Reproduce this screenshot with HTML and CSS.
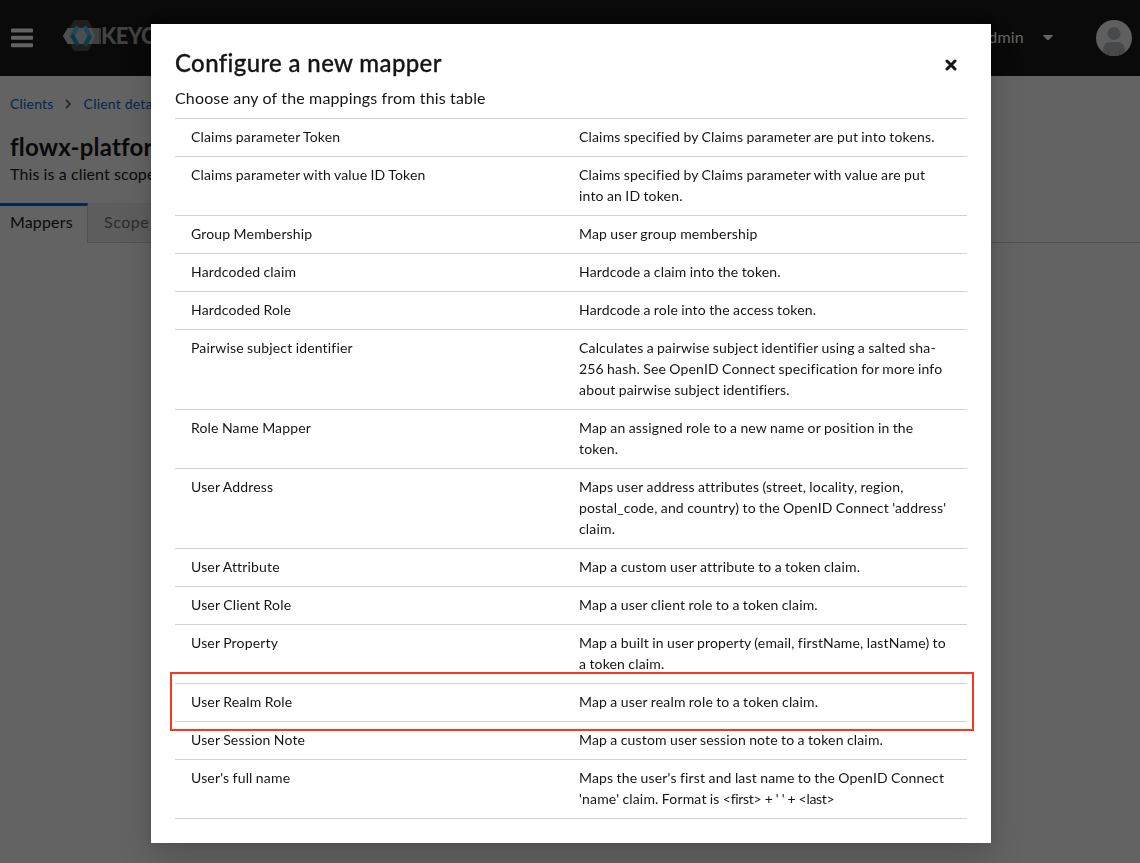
FILE: index.html
```html
<!DOCTYPE html>
<html lang="en">
<head>
<meta charset="utf-8">
<title>Keycloak Administration Console</title>
<link rel="stylesheet" href="styles.css">
</head>
<body>
<div class="app">
  <header class="masthead">
    <svg class="menu" width="22" height="20" viewBox="0 0 22 20"><g fill="#fff"><rect y="0.5" width="22" height="4" rx="1"/><rect y="7.800" width="22" height="4" rx="1"/><rect y="15.200" width="22" height="4" rx="1"/></g></svg>
    <div class="brand">
      <svg width="38" height="32" viewBox="0 0 38 32">
        <path d="M11 0h14l7 12v8l-7 11H11L3 17v-3z" fill="#4d4d4d"/>
        <path d="M4.800 8H38v16H4.800L0 16z" fill="#a0a0a0"/>
        <path d="M4.800 8H28l4 8-4 8H4.800L0 16z" fill="#c8c8c8"/>
        <path d="M37 8v16" stroke="#6a6a6a"/>
        <g fill="none" stroke-width="4.400">
          <path d="M14.800 6.500L9 16" stroke="#4ab8d4"/>
          <path d="M9 15l5.800 10.500" stroke="#1d8fab"/>
          <path d="M21.500 6.500L27.300 17" stroke="#4ab8d4"/>
          <path d="M27.300 16l-5.800 9.500" stroke="#1d9dbb"/>
        </g>
      </svg>
      <span class="brand-name">KEYC</span>
    </div>
    <span class="user">admin</span>
    <svg class="caret" width="10" height="6" viewBox="0 0 10 6"><path d="M.7 0h8.600q.9 0 .4.900L5.700 5q-.7.700-1.400 0L.3.900Q-.2 0 .7 0z" fill="#fff"/></svg>
    <svg width="36" height="36" viewBox="0 0 36 36">
      <defs><clipPath id="avatar"><circle cx="18" cy="18" r="18"/></clipPath></defs>
      <g clip-path="url(#avatar)"><path d="M0 0h36v36H0z" fill="#f5f5f5"/><g fill="#b8bbbe"><circle cx="18" cy="13.500" r="6.500"/><path d="M7 36v-5q0-9 8-9h6q8 0 8 9v5z"/></g><path d="M12.200 31v5M23.800 31v5" stroke="#8a8d90"/></g>
    </svg>
  </header>
  <nav class="crumbs"><a>Clients</a><svg width="6" height="10" viewBox="0 0 6 10"><path d="M1 1l4 4-4 4" fill="none" stroke="#6a6e73" stroke-width="1.800"/></svg><a>Client deta</a></nav>
  <h1 class="page-title">flowx-platfor</h1>
  <p class="page-note">This is a client scope</p>
  <div class="tabs"><span class="tab tab-current">Mappers</span><span class="tab tab-other">Scope</span></div>
</div>
<div class="backdrop">
  <section class="modal">
    <div class="modal-head">
      <h2 class="modal-title">Configure a new mapper</h2>
      <svg class="close" width="12" height="12" viewBox="0 0 12 12"><path d="M2 2l8 8M10 2l-8 8" stroke="#151515" stroke-width="3" stroke-linecap="round"/></svg>
    </div>
    <p class="modal-note">Choose any of the mappings from this table</p>
    <div class="list">
      <div class="row"><span>Claims parameter Token</span><span>Claims specified by Claims parameter are put into tokens.</span></div>
      <div class="row"><span>Claims parameter with value ID Token</span><span>Claims specified by Claims parameter with value are put<br>into an ID token.</span></div>
      <div class="row"><span>Group Membership</span><span>Map user group membership</span></div>
      <div class="row"><span>Hardcoded claim</span><span>Hardcode a claim into the token.</span></div>
      <div class="row"><span>Hardcoded Role</span><span>Hardcode a role into the access token.</span></div>
      <div class="row"><span>Pairwise subject identifier</span><span>Calculates a pairwise subject identifier using a salted sha-<br>256 hash. See OpenID Connect specification for more info<br>about pairwise subject identifiers.</span></div>
      <div class="row"><span>Role Name Mapper</span><span>Map an assigned role to a new name or position in the<br>token.</span></div>
      <div class="row"><span>User Address</span><span>Maps user address attributes (street, locality, region,<br>postal_code, and country) to the OpenID Connect 'address'<br>claim.</span></div>
      <div class="row"><span>User Attribute</span><span>Map a custom user attribute to a token claim.</span></div>
      <div class="row"><span>User Client Role</span><span>Map a user client role to a token claim.</span></div>
      <div class="row"><span>User Property</span><span>Map a built in user property (email, firstName, lastName) to<br>a token claim.</span></div>
      <div class="row row-marked"><span>User Realm Role</span><span>Map a user realm role to a token claim.</span></div>
      <div class="row"><span>User Session Note</span><span>Map a custom user session note to a token claim.</span></div>
      <div class="row"><span>User's full name</span><span>Maps the user's first and last name to the OpenID Connect<br>'name' claim. Format is <span class="format">&lt;first&gt; + ' ' + &lt;last&gt;</span></span></div>
    </div>
  </section>
</div>
</body>
</html>
```
FILE: styles.css
```css
* { box-sizing: border-box; }
body { margin: 0; height: 863px; overflow: hidden; background: #fff; color: #151515; font: 16px/24px Lato, "Noto Sans", sans-serif; white-space: nowrap; }
h1, h2, p { margin: 0; }
.app { height: 863px; }
.masthead { display: flex; align-items: center; height: 76px; padding: 0 8px 0 11px; background: #151515; color: #fff; }
.menu { margin-right: 30px; }
.brand { display: flex; align-items: center; height: 32px; margin-top: -4px; }
.brand-name { color: #a8a8a8; font: 900 22px/32px Lato, sans-serif; letter-spacing: -0.5px; }
.user { margin: -2px 0 0 auto; letter-spacing: 0.2px; }
.caret { margin: 0 43px 0 19px; }
.crumbs { display: flex; align-items: center; gap: 12px; height: 21px; margin: 17px 0 0 10px; font-size: 14px; letter-spacing: 0.2px; color: #06c; }
.crumbs svg { margin: 0 1px 0 -1px; }
.page-title { margin: 17px 0 0 10px; font-size: 24px; line-height: 31px; font-weight: 700; letter-spacing: 0.2px; }
.page-note { margin-left: 10px; letter-spacing: 0.1px; }
.tabs { display: flex; height: 40px; margin-top: 17px; border-bottom: 1px solid #d2d2d2; }
.tab { height: 40px; padding-top: 7px; letter-spacing: 0.15px; }
.tab-current { width: 88px; padding: 4px 0 0 10px; border-top: 3px solid #06c; border-right: 1px solid #d2d2d2; background: #fff; }
.tab-other { width: 80px; padding-left: 16px; background: #f0f0f0; border-bottom: 1px solid #d2d2d2; color: #6a6e73; letter-spacing: 0.5px; }
.backdrop { position: fixed; inset: 0; display: flex; justify-content: center; align-items: flex-start; padding: 24px 0 0 2px; background: rgba(3, 3, 3, 0.62); }
.modal { width: 840px; height: 819px; padding: 24px; background: #fff; box-shadow: 0 16px 32px rgba(3, 3, 3, 0.16), 0 0 8px rgba(3, 3, 3, 0.1); }
.modal-head { display: flex; justify-content: space-between; align-items: center; height: 33px; padding-right: 10px; }
.modal-title { padding-bottom: 4px; font-size: 24px; line-height: 31px; font-weight: 500; letter-spacing: 0.36px; -webkit-text-stroke: 0.3px #151515; }
.modal-note { margin: 5px 0 8px; letter-spacing: 0.15px; }
.list { border-top: 1px solid #d2d2d2; font-size: 14px; line-height: 21px; letter-spacing: 0.17px; word-spacing: -0.5px; }
.row { position: relative; display: grid; grid-template-columns: 388px 1fr; padding: 7px 0 9px 16px; border-bottom: 1px solid #d2d2d2; }
.row-marked::after { content: ""; position: absolute; inset: -12px -7px -10px -5px; border: 2px solid #f8371f; }
.format { letter-spacing: -0.3px; word-spacing: 0; }
```
